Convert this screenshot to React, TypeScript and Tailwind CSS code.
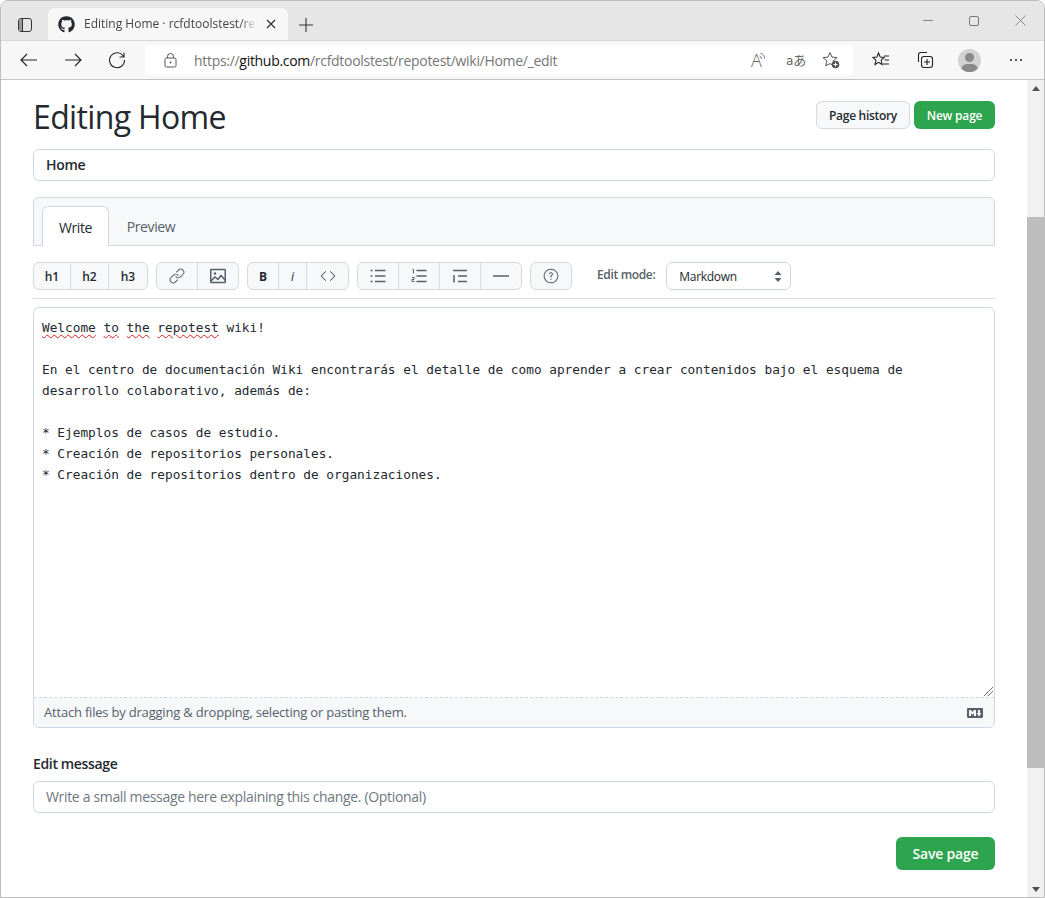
import { ReactNode } from "react";
import { FaGithub } from "react-icons/fa";
import { GoCode, GoLink, GoQuestion } from "react-icons/go";

const sans = "font-['Open_Sans','Noto_Sans',sans-serif]";

const Bar = ({ children, className = "" }: { children: ReactNode; className?: string }) => (
  <div className={`flex h-[28px] rounded-[6px] border border-[#d5d8dc] bg-[#f6f8fa] text-[#24292f] ${className}`}>
    {children}
  </div>
);

const Cell = ({ children, w, last }: { children: ReactNode; w: string; last?: boolean }) => (
  <div className={`flex items-center justify-center ${w} ${last ? "" : "border-r border-[#d5d8dc]"}`}>
    {children}
  </div>
);

const ChromeIcon = ({ children, size = 20, stroke = "#222" }: { children: ReactNode; size?: number; stroke?: string }) => (
  <svg width={size} height={size} viewBox="0 0 20 20" fill="none" stroke={stroke} strokeWidth="1.1">
    {children}
  </svg>
);

const ToolIcon = ({ children }: { children: ReactNode }) => (
  <svg width="16" height="16" viewBox="0 0 16 16" fill="none" stroke="#57606a" strokeWidth="1.5">
    {children}
  </svg>
);

const Squiggle = ({ children }: { children: ReactNode }) => (
  <span className="underline decoration-wavy decoration-[#e02020] decoration-1 underline-offset-2">{children}</span>
);

const TabStrip = () => (
  <div className="flex h-[40px] items-end border-b border-[#d8d8d8] bg-[#e6e6e6] pl-[17px]">
    <div className="mb-[8px] mr-[16px] flex h-[14px] w-[14px] rounded-[3px] border-[1.5px] border-[#333]">
      <div className="h-full w-[4px] border-r border-[#333] bg-[#9a9a9a]" />
    </div>
    <div className="flex h-[32px] w-[240px] items-center rounded-t-[6px] bg-[#f7f7f7] pl-[10px]">
      <FaGithub className="mr-[9px] text-[17px] text-[#24292f]" />
      <span className="w-[173px] whitespace-nowrap text-[12px] text-[#444] font-['Open_Sans',sans-serif] [mask-image:linear-gradient(to_right,black_90%,transparent)]">
        Editing Home · rcfdtoolstest/repo
      </span>
      <svg className="ml-[9px]" width="10" height="10" viewBox="0 0 10 10" stroke="#333" strokeWidth="1.3">
        <path d="M1 1l8 8M9 1L1 9" />
      </svg>
    </div>
    <svg className="mb-[8px] ml-[11px]" width="14" height="14" viewBox="0 0 14 14" stroke="#333" strokeWidth="1.1">
      <path d="M7 0v14M0 7h14" />
    </svg>
    <div className="mb-[14px] ml-auto flex items-center gap-[36px] pr-[18px]">
      <div className="h-px w-[10px] bg-[#888]" />
      <div className="h-[10px] w-[10px] rounded-[2px] border border-[#777]" />
      <svg width="11" height="11" viewBox="0 0 11 11" stroke="#888" strokeWidth="1">
        <path d="M.5.5l10 10M10.5.5l-10 10" />
      </svg>
    </div>
  </div>
);

const AddressBar = () => (
  <div className="flex h-[39px] items-center border-b border-[#c4c4c4] bg-[#f7f7f7]">
    <div className="flex w-[144px] items-center gap-[24px] pl-[18px]">
      <ChromeIcon>
        <path d="M18 10H2M8 4l-6 6 6 6" />
      </ChromeIcon>
      <ChromeIcon>
        <path d="M2 10h16M12 4l6 6-6 6" />
      </ChromeIcon>
      <ChromeIcon>
        <path d="M16.500 6.500A7.500 7.500 0 1 0 17.500 10M17 2.500v4.500h-4.500" />
      </ChromeIcon>
    </div>
    <div className="flex h-[30px] w-[708px] items-center rounded-[4px] bg-white pl-[19px] pr-[13px]">
      <svg width="13" height="15" viewBox="0 0 13 15" fill="none" stroke="#555" strokeWidth="1">
        <rect x="1" y="5" width="11" height="9" rx="1.5" />
        <path d="M3.500 5V3.500a3 3 0 0 1 6 0V5" />
        <circle cx="6.5" cy="9.5" r=".6" fill="#555" />
      </svg>
      <span className="ml-[17px] whitespace-nowrap text-[14px] tracking-[-0.3px] text-[#767676] font-['Open_Sans',sans-serif]">
        https://<span className="text-[#111]">github.com</span>/rcfdtoolstest/repotest/wiki/Home/_edit
      </span>
      <div className="ml-auto flex items-center text-[#666]">
        <div className="flex h-[18px] w-[16px] items-end">
          <span className="text-[18px] font-light leading-[18px] font-['Open_Sans',sans-serif]">A</span>
          <svg className="-ml-[3px] mb-[8px] shrink-0" width="6" height="8" viewBox="0 0 6 8" fill="none" stroke="#777" strokeWidth="1">
            <path d="M.5 3a3 3 0 0 1 2 3M1.500.5a5 5 0 0 1 4 5" />
          </svg>
        </div>
        <span className="ml-[19px] -mt-[2px] w-[18px] whitespace-nowrap text-[13px] leading-none font-['Noto_Sans_CJK_JP',sans-serif]">aあ</span>
        <svg className="ml-[18px]" width="18" height="18" viewBox="0 0 18 18" fill="none" stroke="#555" strokeWidth="1">
          <path d="M8 1.500l2 4.600 5 .5-3.800 3.300 1.100 4.900L8 12.600l-4.300 2.200 1.100-4.900L1 6.600l5-.5z" />
          <circle cx="13.5" cy="13.5" r="3.8" fill="#555" stroke="none" />
          <path d="M13.500 11.500v4M11.500 13.500h4" stroke="#fff" />
        </svg>
      </div>
    </div>
    <div className="flex flex-1 items-center pl-[18px]">
      <ChromeIcon>
        <path d="M7.500 3l1.700 4 4 .4-3 2.800.9 4.300-3.600-2.200L4 14.500l.9-4.300-3-2.800 4-.4zM13 6h5M13.500 10H18M12 14h6" />
      </ChromeIcon>
      <svg className="ml-[24px]" width="20" height="20" viewBox="0 0 20 20" fill="none" stroke="#222" strokeWidth="1.1">
        <path d="M3.500 12V5a2.500 2.500 0 0 1 2.500-2.500h6" />
        <rect x="6.5" y="6.5" width="11" height="11" rx="2.5" />
        <path d="M12 9v6M9 12h6" />
      </svg>
      <div className="relative ml-[23px] h-[23px] w-[23px] overflow-hidden rounded-full bg-[#d2d2d2]">
        <div className="absolute left-[7px] top-[4px] h-[9px] w-[9px] rounded-full bg-[#8a8a8a]" />
        <div className="absolute left-[3px] top-[15px] h-[12px] w-[17px] rounded-full bg-[#8a8a8a]" />
      </div>
      <div className="ml-[29px] flex gap-[3px]">
        <div className="h-[2px] w-[2px] rounded-full bg-[#222]" />
        <div className="h-[2px] w-[2px] rounded-full bg-[#222]" />
        <div className="h-[2px] w-[2px] rounded-full bg-[#222]" />
      </div>
    </div>
  </div>
);

const Scrollbar = () => (
  <div className="flex w-[17px] flex-col items-center bg-[#f1f1f1]">
    <div className="mt-[6px] h-0 w-0 border-x-[4px] border-b-[5px] border-x-transparent border-b-[#505050]" />
    <div className="mt-[126px] h-[551px] w-full bg-[#bdbdbd]" />
    <div className="mt-auto mb-[5px] h-0 w-0 border-x-[4px] border-t-[5px] border-x-transparent border-t-[#505050]" />
  </div>
);

const Toolbar = () => (
  <div className="mt-[16px] flex h-[28px] items-center">
    <Bar className="pt-[1px] text-[12px] font-semibold">
      <Cell w="w-[37px]">h1</Cell>
      <Cell w="w-[38px]">h2</Cell>
      <Cell w="w-[38px]" last>h3</Cell>
    </Bar>
    <Bar className="ml-[8px] text-[16px] text-[#57606a]">
      <Cell w="w-[41px]"><GoLink /></Cell>
      <Cell w="w-[40px]" last>
        <ToolIcon>
          <rect x=".75" y="1.5" width="14.500" height="13" rx=".5" />
          <circle cx="5" cy="5.500" r="1.300" fill="#57606a" stroke="none" />
          <path d="M1 13l4-4 3 2.500 3-4 4.500 5" />
        </ToolIcon>
      </Cell>
    </Bar>
    <Bar className="ml-[8px] text-[12px]">
      <Cell w="w-[31px]"><span className="pt-[1px] font-bold">B</span></Cell>
      <Cell w="w-[28px]"><span className="pt-[1px] italic">i</span></Cell>
      <Cell w="w-[41px]" last><GoCode className="text-[16px] text-[#57606a]" /></Cell>
    </Bar>
    <Bar className="ml-[8px] text-[16px] text-[#57606a]">
      <Cell w="w-[41px]">
        <ToolIcon>
          <path d="M5 2.500h10.500M5 8h10.500M5 13.500h10.500M.5 2.500h2M.5 8h2M.5 13.500h2" />
        </ToolIcon>
      </Cell>
      <Cell w="w-[41px]">
        <ToolIcon>
          <path d="M5.500 2.500h10M5.500 8h10M5.500 13.500h10" />
          <path d="M1.500 1.500h1v4M1 9.500h2v2H1v2h2.500" strokeWidth="1" />
        </ToolIcon>
      </Cell>
      <Cell w="w-[41px]">
        <ToolIcon>
          <path d="M1 2.500h14M6 8h9M6 13.500h9M2 7v7.500" />
        </ToolIcon>
      </Cell>
      <Cell w="w-[40px]" last>
        <ToolIcon>
          <path d="M0 8h16" />
        </ToolIcon>
      </Cell>
    </Bar>
    <Bar className="ml-[8px] text-[16px] text-[#57606a]">
      <Cell w="w-[40px]" last><GoQuestion /></Cell>
    </Bar>
    <span className="ml-[25px] -mt-[2px] text-[12px] font-semibold tracking-[-0.35px] text-[#57606a]">Edit mode:</span>
    <div className="ml-[11px] flex h-[28px] w-[125px] items-center justify-between rounded-[6px] border border-[#d0d7de] bg-white pl-[12px] pr-[8px] pt-[1px] text-[12px] tracking-[-0.3px] text-[#24292f]">
      Markdown
      <svg width="8" height="11" viewBox="0 0 8 11" fill="#57606a">
        <path d="M4 0l3.500 4h-7zM4 11L.5 7h7z" />
      </svg>
    </div>
  </div>
);

const Editor = () => (
  <div className="mt-[8px] flex h-[421px] flex-col rounded-[6px] border border-[#d0d7de]">
    <div className="relative flex-1 whitespace-pre-wrap p-[8px] pt-[9px] text-[12.78px] leading-[21px] text-[#24292f] font-['DejaVu_Sans_Mono',monospace]">
      <Squiggle>Welcome</Squiggle> <Squiggle>to</Squiggle> <Squiggle>the</Squiggle> <Squiggle>repotest</Squiggle> wiki!
      {"\n\n"}En el centro de documentación Wiki encontrarás el detalle de como aprender a crear contenidos bajo el esquema de
      {"\n"}desarrollo colaborativo, además de:
      {"\n\n"}* Ejemplos de casos de estudio.
      {"\n"}* Creación de repositorios personales.
      {"\n"}* Creación de repositorios dentro de organizaciones.
      <svg className="absolute bottom-[1px] right-[1px]" width="9" height="9" viewBox="0 0 9 9" stroke="#777" strokeWidth="1">
        <path d="M0 9l9-9M4 9l5-5" />
      </svg>
    </div>
    <div className="flex h-[30px] items-center justify-between rounded-b-[6px] border-t border-dashed border-[#d0d7de] bg-[#f6f8fa] pl-[10px] pr-[11px] text-[13px] tracking-[-0.2px] text-[#57606a]">
      Attach files by dragging &amp; dropping, selecting or pasting them.
      <svg width="16" height="16" viewBox="0 0 16 16" fill="currentColor">
        <path d="M14.85 3c.63 0 1.15.52 1.14 1.15v7.7c0 .63-.51 1.15-1.15 1.15H1.15C.52 13 0 12.48 0 11.84V4.15C0 3.52.52 3 1.15 3ZM9 11V5H7L5.5 7 4 5H2v6h2V8l1.5 1.92L7 8v3Zm2.99.5L14.5 8H13V5h-2v3H9.5Z" />
      </svg>
    </div>
  </div>
);

export default function App() {
  return (
    <div className={`flex h-[898px] w-[1045px] flex-col overflow-hidden rounded-t-[8px] border border-[#bdbdbd] bg-white ${sans}`}>
      <TabStrip />
      <AddressBar />
      <div className="flex flex-1">
        <main className="flex-1 pl-[32px] pr-[32px]">
          <div className="flex h-[69px] items-start justify-between pt-[21px]">
            <h1 className="text-[32px] font-normal leading-[32px] tracking-[-0.65px] text-[#24292f]">Editing Home</h1>
            <div className="flex gap-[4px] text-[12px] font-semibold">
              <button className="h-[28px] w-[94px] rounded-[6px] border border-[#d5d8dc] bg-[#f6f8fa] pt-[1px] tracking-[-0.3px] text-[#24292f]">Page history</button>
              <button className="h-[28px] w-[81px] rounded-[6px] bg-[#2da44e] pt-[1px] tracking-[-0.2px] text-white">New page</button>
            </div>
          </div>
          <input
            readOnly
            value="Home"
            className="h-[32px] w-full rounded-[6px] border border-[#d0d7de] px-[12px] pb-[1px] text-[14px] font-semibold tracking-[-0.3px] text-[#24292f] outline-none"
          />
          <div className="mt-[16px] flex h-[49px] items-end rounded-t-[6px] border border-[#d0d7de] bg-[#f6f8fa] pl-[8px] text-[14px] tracking-[-0.4px]">
            <div className="-mb-px flex h-[40px] w-[67px] items-center justify-center rounded-t-[6px] border border-b-0 border-[#d0d7de] bg-white pt-[1px] text-[#24292f]">Write</div>
            <div className="flex h-[39px] w-[84px] items-center justify-center pt-[1px] text-[#57606a]">Preview</div>
          </div>
          <Toolbar />
          <div className="mt-[8px] h-px bg-[#d8dee4]" />
          <Editor />
          <div className="mt-[26px] text-[14px] font-semibold leading-[19px] tracking-[-0.35px] text-[#24292f]">Edit message</div>
          <input
            placeholder="Write a small message here explaining this change. (Optional)"
            className="mt-[8px] h-[32px] w-full rounded-[6px] border border-[#d0d7de] px-[12px] pb-[1px] text-[14px] tracking-[-0.33px] text-[#24292f] outline-none placeholder:text-[#6e7781]"
          />
          <div className="mt-[24px] flex justify-end">
            <button className="h-[33px] w-[99px] rounded-[6px] bg-[#2da44e] pb-[1px] text-[14px] font-semibold tracking-[-0.2px] text-white">Save page</button>
          </div>
        </main>
        <Scrollbar />
      </div>
    </div>
  );
}
